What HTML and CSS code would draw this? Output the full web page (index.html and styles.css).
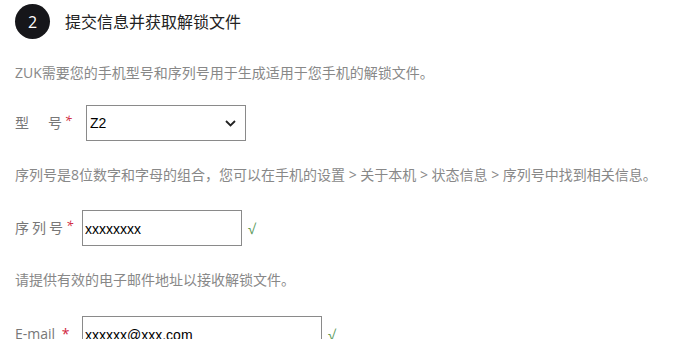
FILE: index.html
```html
<!DOCTYPE html>
<html lang="zh-CN">
<head>
    <meta charset="UTF-8">
    <meta name="viewport" content="width=device-width, initial-scale=1.0">
    <title>提交信息并获取解锁文件</title>
    <link rel="stylesheet" href="styles.css">
</head>
<body>
    <div class="step">
        <span class="step-num">2</span>
        <h2 class="step-title">提交信息并获取解锁文件</h2>
    </div>

    <form class="unlock-form">
        <p class="desc">ZUK需要您的手机型号和序列号用于生成适用于您手机的解锁文件。</p>
        <div class="row">
            <label class="label label-model" for="model">型　号<i class="req">*</i></label>
            <div class="select-wrap">
                <select id="model" name="model">
                    <option>Z2</option>
                    <option>Z2 Pro</option>
                    <option>Z1</option>
                </select>
                <svg class="chevron" width="11" height="7" viewBox="0 0 11 7">
                    <path d="M1 1l4.5 4.5L10 1" fill="none" stroke="#222" stroke-width="1.8"/>
                </svg>
            </div>
        </div>

        <p class="desc desc-serial">序列号是8位数字和字母的组合，您可以在手机的设置 &gt; 关于本机 &gt; 状态信息 &gt; 序列号中找到相关信息。</p>
        <div class="row row-serial">
            <label class="label label-serial" for="serial">序列号<i class="req">*</i></label>
            <input type="text" id="serial" name="serial" value="xxxxxxxx">
            <span class="ok">√</span>
        </div>

        <p class="desc desc-email">请提供有效的电子邮件地址以接收解锁文件。</p>
        <div class="row row-email">
            <label class="label label-email" for="email">E-mail <span class="req-plain">*</span></label>
            <input type="text" id="email" name="email" class="wide" value="xxxxxx@xxx.com">
            <span class="ok">√</span>
        </div>
    </form>
</body>
</html>
```

FILE: styles.css
```css
body {
    margin: 0;
    padding: 0;
    background: #fff;
    font-family: "Open Sans", "Noto Sans CJK SC", sans-serif;
    color: #333;
}
.step {
    display: flex;
    align-items: center;
    height: 35px;
    margin-top: 4px;
    padding-left: 15px;
}
.step-num {
    display: flex;
    align-items: center;
    justify-content: center;
    width: 35px;
    height: 35px;
    border-radius: 50%;
    background: #16161a;
    color: #fff;
    font-size: 16px;
}
.step-title {
    margin: 0 0 0 15px;
    font-size: 16px;
    font-weight: normal;
    color: #222;
    line-height: 20px;
}
.unlock-form {
    padding-left: 15px;
}
.desc {
    margin: 24px 0 0;
    font-size: 14px;
    line-height: 20px;
    color: #888;
    white-space: nowrap;
}
.row {
    display: flex;
    align-items: center;
    margin-top: 22px;
}
.row-serial {
    margin-top: 25px;
}
.row-email {
    margin-top: 26px;
}
.label {
    font-size: 14px;
    color: #777;
    line-height: 20px;
    white-space: nowrap;
}
.label-model {
    width: 71px;
    letter-spacing: 2.5px;
}
.label-serial {
    width: 67px;
    letter-spacing: 3px;
}
.label-email {
    width: 67px;
}
.req {
    font-style: italic;
    color: #d0243c;
    font-size: 13px;
    position: relative;
    top: -3px;
    letter-spacing: 0;
}
.req-plain {
    color: #d0243c;
    margin-left: 3px;
}
.select-wrap {
    position: relative;
}
select {
    appearance: none;
    -webkit-appearance: none;
    width: 160px;
    height: 36px;
    margin: 0;
    padding: 0 3px;
    border: 1px solid #8a8a8a;
    border-radius: 0;
    background: #fff;
    font-family: "Liberation Sans", Arial, sans-serif;
    font-size: 14px;
    color: #000;
}
.chevron {
    position: absolute;
    right: 10px;
    top: 15px;
    pointer-events: none;
}
input {
    box-sizing: border-box;
    width: 160px;
    height: 36px;
    margin: 0;
    padding: 2px 2px 0;
    border: 1px solid #8a8a8a;
    border-radius: 0;
    font-family: "Liberation Sans", Arial, sans-serif;
    font-size: 14px;
    color: #000;
}
input.wide {
    width: 240px;
}
.ok {
    margin-left: 6px;
    color: #5b9a5b;
    font-size: 14px;
}
```
